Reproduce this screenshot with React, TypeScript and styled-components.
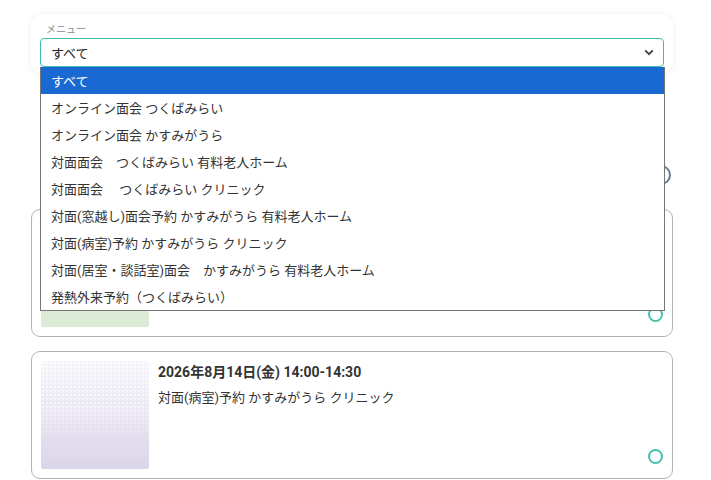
import React from "react";
import styled, { createGlobalStyle } from "styled-components";

const GlobalStyle = createGlobalStyle`
  html, body {
    margin: 0;
    padding: 0;
    background: #ffffff;
  }
  body {
    font-family: "Roboto", "Noto Sans CJK JP", sans-serif;
    color: #333333;
  }
  * { box-sizing: border-box; }
`;

const Page = styled.div`
  width: 711px;
  height: 480px;
  overflow: hidden;
  padding: 14px 38px 0 31px;
  display: flex;
  flex-direction: column;
`;

const FilterCard = styled.div`
  position: relative;
  z-index: 5;
  background: #fff;
  border-radius: 12px;
  box-shadow: 0 1px 8px rgba(0, 0, 0, 0.07);
  padding: 8px 9px 6px;
`;

const FieldLabel = styled.div`
  font-size: 10px;
  line-height: 16px;
  color: #8a8a8a;
  padding-left: 6px;
`;

const SelectWrap = styled.div`
  position: relative;
`;

const SelectBox = styled.div`
  height: 29px;
  border: 1px solid #3fbfa8;
  border-radius: 4px;
  padding: 0 9px 0 10px;
  display: flex;
  align-items: center;
  justify-content: space-between;
  font-size: 13px;
  color: #222;
  background: #fff;
`;

const OptionList = styled.ul`
  position: absolute;
  top: 100%;
  left: 0;
  width: calc(100% + 1px);
  margin: 0;
  padding: 0;
  list-style: none;
  background: #fff;
  border: 1px solid #767676;
  border-top: none;
`;

const OptionItem = styled.li<{ $active?: boolean }>`
  height: 27px;
  display: flex;
  align-items: center;
  padding-left: 10px;
  font-size: 13px;
  white-space: pre;
  color: ${(p) => (p.$active ? "#ffffff" : "#333333")};
  background: ${(p) => (p.$active ? "#1a69d2" : "transparent")};
`;

const PickerRow = styled.div`
  height: 136px;
  display: flex;
  align-items: flex-end;
  justify-content: flex-end;
  padding: 0 2px 24px 0;
`;

const RoundToggle = styled.div`
  width: 20px;
  height: 20px;
  border-radius: 50%;
  border: 2px solid #6a7c98;
`;

const SlotList = styled.div`
  display: flex;
  flex-direction: column;
  gap: 14px;
`;

const SlotCard = styled.div`
  height: 128px;
  border: 1px solid #b3b3b3;
  border-radius: 9px;
  padding: 9px;
  display: flex;
  gap: 9px;
  background: #fff;
`;

const Thumb = styled.div<{ $tone: "green" | "lavender" }>`
  position: relative;
  width: 108px;
  height: 108px;
  flex: none;
  border-radius: 2px;
  overflow: hidden;
  background: ${(p) =>
    p.$tone === "green"
      ? "#dcebd5"
      : "linear-gradient(to bottom, #f7f5fb 0%, #ebe7f3 45%, #dbd5e9 100%)"};
  &::after {
    content: "";
    position: absolute;
    inset: 0;
    display: ${(p) => (p.$tone === "lavender" ? "block" : "none")};
    background-image: radial-gradient(circle, rgba(255, 255, 255, 0.9) 1px, transparent 1.6px);
    background-size: 4px 4px;
    -webkit-mask-image: linear-gradient(to bottom, #000 0%, rgba(0, 0, 0, 0.6) 45%, transparent 75%);
    mask-image: linear-gradient(to bottom, #000 0%, rgba(0, 0, 0, 0.6) 45%, transparent 75%);
  }
`;

const SlotBody = styled.div`
  flex: 1;
  display: flex;
  flex-direction: column;
  padding-top: 1px;
`;

const SlotTitle = styled.div`
  font-size: 14px;
  font-weight: 700;
  line-height: 20px;
  color: #333;
`;

const SlotText = styled.div`
  font-size: 13px;
  line-height: 18px;
  margin-top: 7px;
  color: #333;
`;

const SlotAside = styled.div`
  display: flex;
  align-items: flex-end;
  padding-bottom: 5px;
`;

const Radio = styled.span`
  width: 15px;
  height: 15px;
  border-radius: 50%;
  border: 2px solid #44c1b0;
  display: block;
`;

const Chevron = () => (
  <svg width="10" height="7" viewBox="0 0 10 7" aria-hidden="true">
    <path d="M1.2 1.4 L5 5.2 L8.8 1.4" fill="none" stroke="#444" strokeWidth="1.9" />
  </svg>
);

const menuOptions = [
  "すべて",
  "オンライン面会 つくばみらい",
  "オンライン面会 かすみがうら",
  "対面面会　つくばみらい 有料老人ホーム",
  "対面面会　 つくばみらい クリニック",
  "対面(窓越し)面会予約 かすみがうら 有料老人ホーム",
  "対面(病室)予約 かすみがうら クリニック",
  "対面(居室・談話室)面会　かすみがうら 有料老人ホーム",
  "発熱外来予約（つくばみらい）",
];

type Slot = {
  id: string;
  tone: "green" | "lavender";
  title?: string;
  text?: string;
};

// The first slot's details sit under the open menu, so only its thumbnail and radio show.
const slots: Slot[] = [
  { id: "slot-1", tone: "green" },
  {
    id: "slot-2",
    tone: "lavender",
    title: "2026年8月14日(金) 14:00-14:30",
    text: "対面(病室)予約 かすみがうら クリニック",
  },
];

export default function App() {
  return (
    <>
      <GlobalStyle />
      <Page>
        <FilterCard>
          <FieldLabel>メニュー</FieldLabel>
          <SelectWrap>
            <SelectBox>
              <span>すべて</span>
              <Chevron />
            </SelectBox>
            <OptionList role="listbox">
              {menuOptions.map((o, i) => (
                <OptionItem key={o} $active={i === 0} role="option">
                  {o}
                </OptionItem>
              ))}
            </OptionList>
          </SelectWrap>
        </FilterCard>

        <PickerRow>
          <RoundToggle />
        </PickerRow>

        <SlotList>
          {slots.map((s) => (
            <SlotCard key={s.id}>
              <Thumb $tone={s.tone} />
              <SlotBody>
                {s.title && <SlotTitle>{s.title}</SlotTitle>}
                {s.text && <SlotText>{s.text}</SlotText>}
              </SlotBody>
              <SlotAside>
                <Radio />
              </SlotAside>
            </SlotCard>
          ))}
        </SlotList>
      </Page>
    </>
  );
}
